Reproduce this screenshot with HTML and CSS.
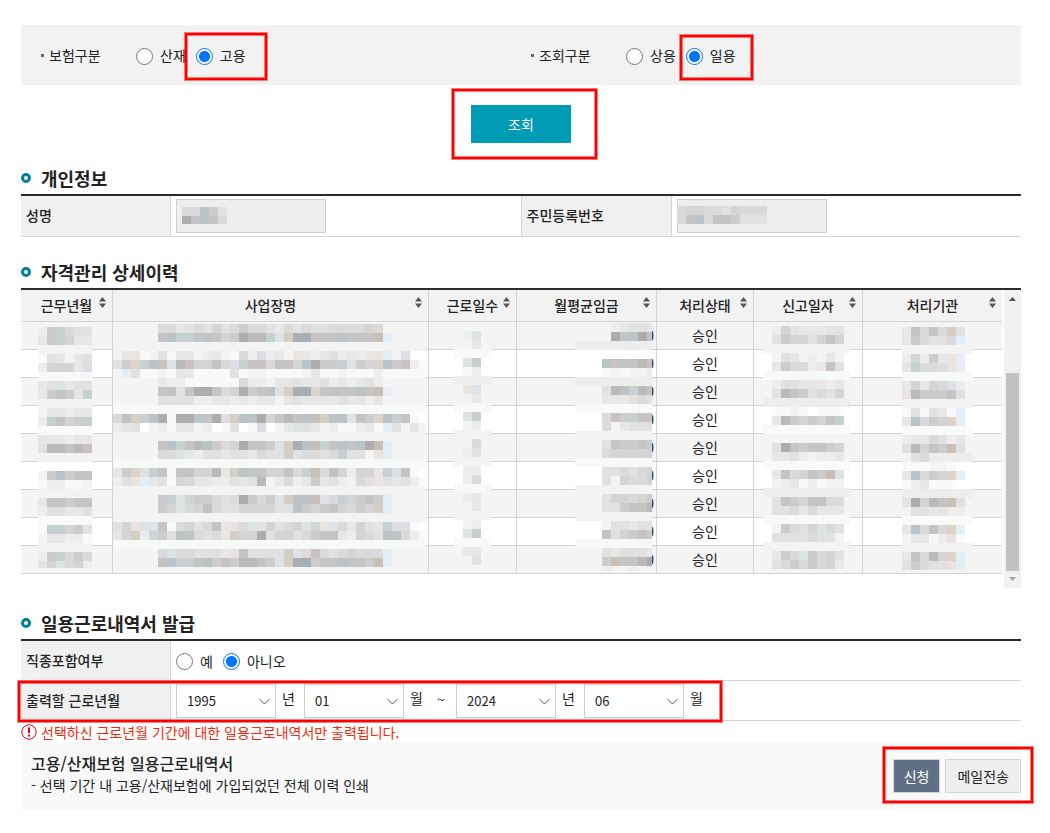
FILE: index.html
```html
<!DOCTYPE html>
<html lang="ko">
<head>
<meta charset="utf-8">
<meta name="viewport" content="width=device-width, initial-scale=1">
<title>일용근로내역서 발급</title>
<link rel="stylesheet" href="styles.css">
</head>
<body>
<main class="page">
  <form class="search">
    <div class="search-bar">
      <div class="search-item" role="radiogroup" aria-labelledby="ins-label">
        <span class="search-label" id="ins-label">보험구분</span>
        <label class="choice"><input class="radio" type="radio" name="insurance">산재</label>
        <label class="choice"><input class="radio" type="radio" name="insurance" checked>고용</label>
        <span class="frame frame-insurance"></span>
      </div>
      <div class="search-item" role="radiogroup" aria-labelledby="type-label">
        <span class="search-label" id="type-label">조회구분</span>
        <label class="choice"><input class="radio" type="radio" name="kind">상용</label>
        <label class="choice"><input class="radio" type="radio" name="kind" checked>일용</label>
        <span class="frame frame-kind"></span>
      </div>
    </div>
    <div class="search-action">
      <button class="btn-search" type="button">조회</button>
      <span class="frame frame-search"></span>
    </div>
  </form>

  <section>
    <h2 class="title">개인정보</h2>
    <table class="form-table person-table">
      <colgroup><col class="w-label"><col><col class="w-split"><col></colgroup>
      <tr>
        <th scope="row"><label for="name">성명</label></th>
        <td><div class="field"><input class="text" id="name" type="text" disabled><svg class="mosaic m-name" data-mosaic="name"></svg></div></td>
        <th scope="row" class="split"><label for="rrn">주민등록번호</label></th>
        <td><div class="field"><input class="text" id="rrn" type="text" disabled><svg class="mosaic m-rrn" data-mosaic="rrn"></svg></div></td>
      </tr>
    </table>
  </section>

  <section>
    <h2 class="title">자격관리 상세이력</h2>
    <div class="grid-box">
      <div class="grid-main">
        <table class="grid-table">
          <colgroup><col class="c-month"><col><col class="c-days"><col class="c-wage"><col class="c-status"><col class="c-date"><col class="c-office"></colgroup>
          <thead>
            <tr>
              <th scope="col">근무년월<button class="sort" type="button" aria-label="정렬"><svg viewBox="0 0 7 11"><path d="M0 4.5 3.5 0 7 4.5zM0 6.5h7L3.5 11z"/></svg></button></th>
              <th scope="col">사업장명<button class="sort" type="button" aria-label="정렬"><svg viewBox="0 0 7 11"><path d="M0 4.5 3.5 0 7 4.5zM0 6.5h7L3.5 11z"/></svg></button></th>
              <th scope="col">근로일수<button class="sort" type="button" aria-label="정렬"><svg viewBox="0 0 7 11"><path d="M0 4.5 3.5 0 7 4.5zM0 6.5h7L3.5 11z"/></svg></button></th>
              <th scope="col">월평균임금<button class="sort" type="button" aria-label="정렬"><svg viewBox="0 0 7 11"><path d="M0 4.5 3.5 0 7 4.5zM0 6.5h7L3.5 11z"/></svg></button></th>
              <th scope="col">처리상태<button class="sort" type="button" aria-label="정렬"><svg viewBox="0 0 7 11"><path d="M0 4.5 3.5 0 7 4.5zM0 6.5h7L3.5 11z"/></svg></button></th>
              <th scope="col">신고일자<button class="sort" type="button" aria-label="정렬"><svg viewBox="0 0 7 11"><path d="M0 4.5 3.5 0 7 4.5zM0 6.5h7L3.5 11z"/></svg></button></th>
              <th scope="col">처리기관<button class="sort" type="button" aria-label="정렬"><svg viewBox="0 0 7 11"><path d="M0 4.5 3.5 0 7 4.5zM0 6.5h7L3.5 11z"/></svg></button></th>
            </tr>
          </thead>
          <tbody>
            <tr>
              <td><svg class="mosaic m-month" data-mosaic="month"></svg></td>
              <td><svg class="mosaic m-place" data-mosaic="place"></svg></td>
              <td><svg class="mosaic m-days" data-mosaic="days"></svg></td>
              <td class="num">0<svg class="mosaic m-wage" data-mosaic="wage"></svg></td>
              <td>승인</td>
              <td><svg class="mosaic m-date" data-mosaic="date"></svg></td>
              <td><svg class="mosaic m-office" data-mosaic="office"></svg></td>
            </tr>
            <tr><td></td><td></td><td></td><td class="num">0</td><td>승인</td><td></td><td></td></tr>
            <tr><td></td><td></td><td></td><td class="num">0</td><td>승인</td><td></td><td></td></tr>
            <tr><td></td><td></td><td></td><td class="num">0</td><td>승인</td><td></td><td></td></tr>
            <tr><td></td><td></td><td></td><td class="num">0</td><td>승인</td><td></td><td></td></tr>
            <tr><td></td><td></td><td></td><td class="num">0</td><td>승인</td><td></td><td></td></tr>
            <tr><td></td><td></td><td></td><td class="num">0</td><td>승인</td><td></td><td></td></tr>
            <tr><td></td><td></td><td></td><td class="num">0</td><td>승인</td><td></td><td></td></tr>
            <tr><td></td><td></td><td></td><td class="num">0</td><td>승인</td><td></td><td></td></tr>
          </tbody>
        </table>
      </div>
      <div class="scrollbar" aria-hidden="true">
        <svg class="scroll-arrow up" viewBox="0 0 7 4"><path d="M0 4 3.5 0 7 4z"/></svg>
        <div class="scroll-track"><div class="scroll-thumb"></div></div>
        <svg class="scroll-arrow down" viewBox="0 0 7 4"><path d="M0 0h7L3.5 4z"/></svg>
      </div>
    </div>
  </section>

  <section>
    <h2 class="title">일용근로내역서 발급</h2>
    <div class="issue">
      <table class="form-table">
        <colgroup><col class="w-label"><col></colgroup>
        <tr>
          <th scope="row">직종포함여부</th>
          <td>
            <div class="choices">
              <label class="choice"><input class="radio" type="radio" name="job">예</label>
              <label class="choice"><input class="radio" type="radio" name="job" checked>아니오</label>
            </div>
          </td>
        </tr>
        <tr>
          <th scope="row">출력할 근로년월</th>
          <td>
            <div class="period">
              <span class="select"><select id="y1" aria-label="시작 년"><option>1995</option></select><svg viewBox="0 0 11 7"><path d="M.5 1 5.500 6 10.500 1"/></svg></span>
              <label class="unit" for="y1">년</label>
              <span class="select"><select id="m1" aria-label="시작 월"><option>01</option></select><svg viewBox="0 0 11 7"><path d="M.5 1 5.500 6 10.500 1"/></svg></span>
              <label class="unit" for="m1">월</label>
              <span class="tilde">~</span>
              <span class="select"><select id="y2" aria-label="종료 년"><option>2024</option></select><svg viewBox="0 0 11 7"><path d="M.5 1 5.500 6 10.500 1"/></svg></span>
              <label class="unit" for="y2">년</label>
              <span class="select"><select id="m2" aria-label="종료 월"><option>06</option></select><svg viewBox="0 0 11 7"><path d="M.5 1 5.500 6 10.500 1"/></svg></span>
              <label class="unit" for="m2">월</label>
            </div>
          </td>
        </tr>
      </table>
      <span class="frame frame-period"></span>
    </div>
    <p class="notice">
      <svg viewBox="0 0 16 16"><circle cx="8" cy="8" r="7.2"/><path d="M8 3.500v5.500M8 10.500v2"/></svg>
      선택하신 근로년월 기간에 대한 일용근로내역서만 출력됩니다.
    </p>
    <div class="panel">
      <div class="panel-text">
        <h3>고용/산재보험 일용근로내역서</h3>
        <p>- 선택 기간 내 고용/산재보험에 가입되었던 전체 이력 인쇄</p>
      </div>
      <div class="panel-actions">
        <button class="btn btn-apply" type="button">신청</button>
        <button class="btn" type="button">메일전송</button>
        <span class="frame frame-actions"></span>
      </div>
    </div>
  </section>
</main>
<script src="mosaic.js"></script>
</body>
</html>
```
FILE: styles.css
```css
*, *::before { box-sizing: border-box; }

body {
  margin: 0;
  background: #fff;
  color: #222;
  font: 14px/20px "Noto Sans CJK KR", "Noto Sans", sans-serif;
}

button, input, select { font: inherit; color: inherit; }
h2, h3, p { margin: 0; }

.page { padding: 25px 29px 23px 21px; }

/* Highlight frames laid over the controls */
.frame {
  position: absolute;
  z-index: 3;
  border: 2px solid #f00;
  box-shadow: 0 0 0 1px rgba(255, 0, 0, .5), inset 0 0 0 1px rgba(255, 0, 0, .5);
  pointer-events: none;
}
.frame-insurance { left: 164px; top: 8px; width: 82px; height: 47px; }
.frame-kind { left: 169px; top: 10px; width: 73px; height: 45px; }
.frame-search { inset: -16px -26px -16px -19px; }
.frame-period { left: -3px; bottom: -1px; width: 704px; height: 41px; }
.frame-actions { inset: -12px -12px -10px -10px; }

/* Search */
.search { display: flex; flex-direction: column; align-items: center; gap: 20px; }
.search-bar {
  display: grid;
  grid-template-columns: 49% 51%;
  width: 100%;
  background: #f2f2f2;
}
.search-item {
  position: relative;
  display: flex;
  align-items: center;
  gap: 10px;
  height: 60px;
  padding-left: 20px;
}
.search-label { display: flex; align-items: center; gap: 5px; width: 85px; }
.search-label::before { content: ""; width: 3px; height: 3px; background: #666; }
.search-action { position: relative; }
.btn-search {
  display: block;
  width: 100px;
  height: 38px;
  padding: 0;
  border: 0;
  background: #009bb4;
  color: #fff;
}

.choice { display: flex; align-items: center; gap: 7px; }
.radio {
  appearance: none;
  width: 17px;
  height: 17px;
  margin: 2px 0 0;
  border: 1px solid #767676;
  border-radius: 50%;
  background: #fff;
}
.radio:checked {
  border-color: #0075ff;
  background: radial-gradient(circle, #0075ff 5px, #fff 6px);
}

/* Section titles */
.title {
  display: flex;
  align-items: center;
  gap: 10px;
  padding: 21px 0 2px;
  border-bottom: 2px solid #2b2b2b;
  font-size: 18px;
  line-height: 28px;
  font-weight: 700;
}
.title::before {
  content: "";
  width: 10px;
  height: 10px;
  border: 3px solid #007f9b;
  border-radius: 50%;
}

/* Form tables */
.form-table { width: 100%; table-layout: fixed; border-spacing: 0; }
.form-table th, .form-table td { height: 40px; padding: 0 5px; border-bottom: 1px solid #d5d5d5; }
.person-table th, .person-table td { height: 41px; }
.form-table th {
  padding-bottom: 2px;
  background: #f0f0f0;
  border-right: 1px solid #d5d5d5;
  font-weight: 500;
  text-align: left;
}
.form-table .split { border-left: 1px solid #d5d5d5; }
.w-label { width: 150px; }
.w-split { width: 151px; }
.field { position: relative; width: 150px; }
.text {
  display: block;
  width: 100%;
  height: 34px;
  border: 1px solid #d0d0d0;
  background: #eee;
}

/* Record grid */
.grid-box { display: flex; gap: 2px; }
.grid-main { flex: 1; padding-bottom: 14px; }
.grid-table { width: 100%; table-layout: fixed; border-spacing: 0; }
.grid-table th, .grid-table td {
  position: relative;
  padding: 0 0 2px;
  border-right: 1px solid #d2d2d7;
  border-bottom: 1px solid #d2d2d7;
  text-align: center;
}
.grid-table th:last-child, .grid-table td:last-child { border-right: 0; }
.grid-table th { height: 32px; background: #f2f2f2; font-weight: 500; }
.grid-table td { height: 28px; }
.grid-table tbody tr:nth-child(odd) { background: #f4f4f4; }
.grid-table .num { padding-right: 2px; text-align: right; }
.grid-table tbody tr:first-child td { z-index: 1; }
.c-month { width: 92px; }
.c-days { width: 88px; }
.c-wage { width: 140px; }
.c-status { width: 97px; }
.c-date { width: 109px; }
.c-office { width: 139px; }
.sort {
  position: absolute;
  right: 6px;
  top: 7px;
  width: 7px;
  height: 11px;
  padding: 0;
  border: 0;
  background: none;
}
.sort svg { display: block; width: 7px; height: 11px; fill: #555; }

.scrollbar {
  display: flex;
  flex-direction: column;
  align-items: center;
  width: 17px;
  padding: 7px 0;
  background: #f1f1f1;
}
.scroll-track { flex: 1; display: flex; align-items: flex-end; padding: 6px 0; }
.scroll-thumb { width: 13px; height: 75%; background: #c1c1c1; }
.scroll-arrow { width: 7px; height: 4px; fill: #505050; }
.scroll-arrow.down { fill: #a3a3a3; }

/* Masked values */
.mosaic { position: absolute; overflow: hidden; }
.m-name { left: 6px; top: 8px; width: 45px; height: 17px; }
.m-rrn { left: 0; top: 7px; width: 90px; height: 18px; }
.m-month { left: 17px; top: 5px; width: 55px; height: 241px; }
.m-place { left: 0; top: 2px; width: 313px; height: 243px; }
.m-days { left: 25px; top: 9px; width: 37px; height: 234px; }
.m-wage { left: 58px; top: 1px; width: 77px; height: 248px; }
.m-date { left: 9px; top: 4px; width: 87px; height: 243px; }
.m-office { left: 39px; top: 5px; width: 71px; height: 243px; }

/* Issue form */
.issue { position: relative; }
.choices { display: flex; gap: 10px; }
.period { display: flex; align-items: center; }
.select { position: relative; width: 100px; }
.select select {
  appearance: none;
  display: block;
  width: 100%;
  height: 34px;
  padding: 0 24px 0 10px;
  border: 1px solid #ccd0d6;
  border-radius: 0;
  background: #fff;
  font-size: 13px;
}
.select svg {
  position: absolute;
  right: 6px;
  top: 14px;
  width: 11px;
  height: 7px;
  fill: none;
  stroke: #555;
  pointer-events: none;
}
.unit { width: 28px; padding: 0 0 6px 6px; }
.tilde { width: 24px; padding: 0 0 4px 5px; }

.notice { display: flex; align-items: center; gap: 4px; height: 21px; color: #f22b0c; }
.notice svg { width: 16px; height: 16px; margin-top: 1px; fill: none; stroke: #e60012; stroke-width: 2px; }
.notice circle { stroke-width: 1px; }

.panel {
  display: flex;
  align-items: center;
  justify-content: space-between;
  padding-left: 10px;
  background: #f9f9f9;
}
.panel-text { padding: 9px 0 15px; }
.panel h3 { font-size: 16px; line-height: 24px; font-weight: 500; }
.panel-actions { position: relative; display: flex; gap: 5px; }
.btn {
  height: 34px;
  padding: 0 11px;
  border: 1px solid #d3d6d9;
  background: #eee;
}
.btn-apply { padding: 0 10px; background: #5f7085; color: #fff; }
```
FILE: mosaic.js
```js
// Masks hidden values with a coarse 9px mosaic; each character is one block.
const CELL = 9;
const TONES = {
  0: '#ffffff', 1: '#f9f9f9', 2: '#f3f3f3', 3: '#ededed', 4: '#e7e7e7',
  5: '#e1e1e1', 6: '#dadada', 7: '#d4d4d4', 8: '#cccccc', 9: '#c4c4c4',
  a: '#bababa', b: '#aeacac', c: '#f6f9f8', d: '#e6edf4', e: '#ddd3c8',
  f: '#c8cfd1', g: '#bcc3c6', h: '#c8c2c2', i: '#a9aeb4', j: '#d5cec2',
  k: '#dde2e4', l: '#e9e4e1', m: '#dddde3', n: '#c8c0b6'
};

// "=x" fills a whole row with tone x.
const MOSAICS = {
  name: ['66g85', 'b9g96'],
  rrn: ['6776657666', '69g6998555'],
  month: ['38f655', '48f744', '=2', '15424k', '37774m', '=c', '45k455', '4898lf', '=2',
    '244344', '3f978f', '=1', 'l44344', '5aa9ah', '=2', '=0', '28g899', '133112',
    '=2', '499899', '355445', '=1', '1ff785', '244331', '=2', '38f686', '57k673'],
  place: [
    '.....664565756866546k6k5666676',
    '.....9gff9g978baafkjiih99g999nd',
    '=2',
    '24l125c442342163m342l43453434ld2m00',
    '58efghkah7796mf9h69h7gb88f587eg8h31',
    '2d511214411115122111124112c113c1111',
    '.....43311111163324l5445343453',
    '.....9gk9bi967b89gkjiie9g9hg9nd',
    '.....55553344343442l5444454l3l',
    '=1',
    '6gjfgbcbbg9bmjggb79a9gnjggk98egfh10',
    '3l5023c442301501m024k54231c341d52l2',
    '=2',
    '.....9gf9ag867b998kjignf9g9gbnd',
    '.....66k4355455465kj56656f552ld',
    '=c',
    'l8ekfhc9h77a4jg9h77h6fn6g7d77lfmh10',
    '35ld451764433545a246348453265lk4531',
    '=2',
    '.....8fk78f656b868kjggnk6f7898d',
    '.....87k67g655777755g87897687jd',
    '=2',
    '57lkkhc675694l6k57567k7lk6475lfmm10',
    'l7jd785g96564j77b5775689943765gg631',
    '=c',
    '.....6k665554l95555jk6h6k67666d',
    '.....9gff9g8h8aa98kjii899g998nd'
  ],
  days: ['.3k', '.24', '=1', '.k8', '.13', '=3', '.lk', '.24', '=c', '.k8', '.23', '=2', '.26',
    '.35', '=2', '.33', '.36', '=c', '.34', '.24', '=2', '.23', '.k8', '=1', '.44', '.25'],
  wage: ['....34554', '....b9gbh', '=3', '=0', '...gh99ah', '...121223', '=3', '222kagfah',
    '222444565', '=1', '0006h8f9h', '000624555', '=2', '222598898', '222677777', '=c',
    '000556k67', '000527667', '=2', '222577678', '22255899a', '=2', '000255455',
    '000957898', '=c', '222545554', '2228n99ab', '...322322'],
  date: ['.375444lk', '.58775797', '=2', '.25423242', '.486634hk', '=c', '.35544434', '.5a985657',
    '=3', '.11210111', '.4a8787hf', '=1', '', '.5b989987', '.44532334', '=1', '.496798nk',
    '.23413122', '=3', '.59879966', '.55646444', '=c', '.28657k65', '.55556552', '=2',
    '.486k8675', '.56868674'],
  office: ['49696jk', '486556d', '=2', '37384ld', 'lf66mld', '=c', '474765d', 'la888hk', '=2',
    '151541d', '4g687ed', '=1', '3446534', '5a798nk', '25633333', '1112210', '4g687ed',
    '1341110', '=3', 'lb7ahnk', '2554l33', '=1', '4g696ed', '24413l1', '=2', '496a7ed', '58655ld']
};

function addRect(svg, x, y, width, tone) {
  const rect = document.createElementNS('http://www.w3.org/2000/svg', 'rect');
  rect.setAttribute('x', x);
  rect.setAttribute('y', y);
  rect.setAttribute('width', width);
  rect.setAttribute('height', CELL);
  rect.setAttribute('fill', TONES[tone]);
  svg.appendChild(rect);
}

document.querySelectorAll('[data-mosaic]').forEach((svg) => {
  MOSAICS[svg.dataset.mosaic].forEach((row, r) => {
    if (row[0] === '=') {
      addRect(svg, 0, r * CELL, '100%', row[1]);
      return;
    }
    [...row].forEach((tone, c) => {
      if (tone !== '.') addRect(svg, c * CELL, r * CELL, CELL, tone);
    });
  });
});
```
